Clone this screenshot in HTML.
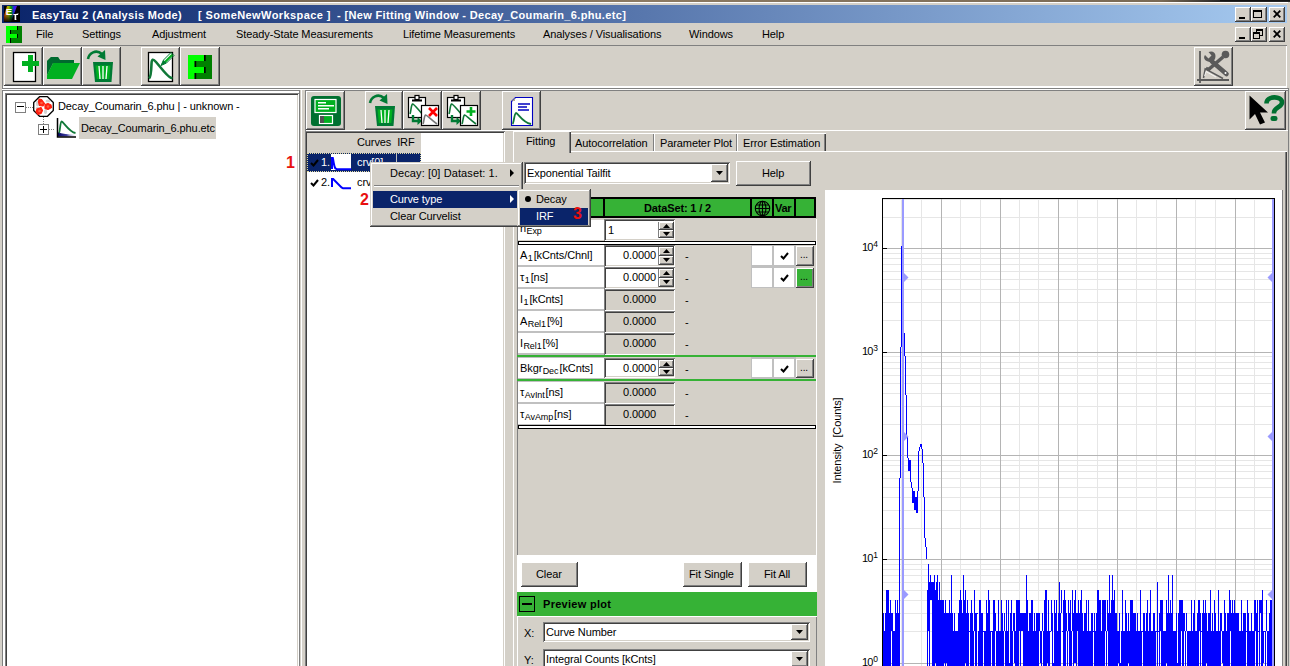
<!DOCTYPE html>
<html><head><meta charset="utf-8">
<style>
html,body{margin:0;padding:0;}
body{width:1290px;height:666px;overflow:hidden;position:relative;background:#d4d0c8;font-family:"Liberation Sans",sans-serif;font-size:11px;color:#000;}
.a{position:absolute;}
.t{position:absolute;white-space:pre;line-height:13px;letter-spacing:-0.1px;}
.raised{background:#d4d0c8;box-shadow:inset -1px -1px #404040,inset 1px 1px #fff,inset -2px -2px #808080;}
.sunk{box-shadow:inset 1px 1px #808080,inset -1px -1px #fff,inset 2px 2px #404040,inset -2px -2px #d4d0c8;}
.cbtn{position:absolute;width:16px;height:15px;background:#d4d0c8;box-shadow:inset -1px -1px #404040,inset 1px 1px #fff,inset -2px -2px #808080;}
</style></head>
<body>
<!-- desktop strip -->
<div class="a" style="left:0;top:0;width:1290px;height:2px;background:linear-gradient(to right,#6a5a48,#8c7a62 50%,#7a6a55 90%,#222 95%)"></div>
<div class="a" style="left:1220px;top:0;width:70px;height:1px;background:#111"></div>
<div class="a" style="left:0;top:2px;width:1288px;height:1px;background:#fff"></div>
<!-- title bar -->
<div class="a" style="left:2px;top:5px;width:1285px;height:18px;background:linear-gradient(to right,#0a246a,#a6caf0)"></div>
<div class="a" id="logo" style="left:4px;top:6px;width:16px;height:16px;background:#000;overflow:hidden">
 <svg width="16" height="16" viewBox="0 0 16 16">
  <defs><linearGradient id="rb" x1="0" y1="0" x2="1" y2="0"><stop offset="0" stop-color="#d00000"/><stop offset="0.25" stop-color="#e08000"/><stop offset="0.45" stop-color="#a0c000"/><stop offset="0.6" stop-color="#00a000"/><stop offset="0.8" stop-color="#2020ff"/><stop offset="1" stop-color="#8000d0"/></linearGradient>
  <linearGradient id="fd" x1="0" y1="0" x2="0" y2="1"><stop offset="0" stop-color="#000" stop-opacity="0"/><stop offset="0.45" stop-color="#000" stop-opacity="0.1"/><stop offset="1" stop-color="#000" stop-opacity="0.95"/></linearGradient></defs>
  <path d="M3 0 H13 L7 16 H-2 Z" fill="url(#rb)"/>
  <path d="M-2 0 H16 V16 H-2 Z" fill="url(#fd)"/>
  <text x="1.8" y="8.6" font-family="Liberation Sans" font-weight="bold" font-size="9.5" fill="#fff">E</text>
  <path d="M8.5 8.2 C9.5 7.6 13 8.2 14.5 7.2 L14 9 H12.2 V13.5 L13 13.8 L12 14 H10.6 V9 Z" fill="#fff"/>
 </svg>
</div>
<div class="t" style="left:32px;top:9px;color:#fff;font-weight:bold;letter-spacing:0.36px">EasyTau 2 (Analysis Mode)</div>
<div class="t" style="left:198px;top:9px;color:#fff;font-weight:bold;letter-spacing:0.42px">[ SomeNewWorkspace ]</div>
<div class="t" style="left:337px;top:9px;color:#fff;font-weight:bold;letter-spacing:0.34px">- [New Fitting Window - Decay_Coumarin_6.phu.etc]</div>
<!-- caption buttons -->
<div class="cbtn" style="left:1235px;top:7px"><div class="a" style="left:4px;top:10px;width:6px;height:2px;background:#000"></div></div>
<div class="cbtn" style="left:1251px;top:7px"><div class="a" style="left:2px;top:3px;width:7px;height:5px;border:1px solid #000;border-top-width:2px"></div></div>
<div class="cbtn" style="left:1269px;top:7px"><svg class="a" style="left:4px;top:3px" width="8" height="8"><path d="M0.7 0.7 L7.3 7.3 M7.3 0.7 L0.7 7.3" stroke="#000" stroke-width="1.8"/></svg></div>

<!-- menu bar -->
<div class="a" style="left:6px;top:26px;width:16px;height:17px;background:#008000">
 <div class="a" style="left:0;top:0;width:11px;height:17px;background:#00ff00"></div>
 <div class="a" style="left:5px;top:4px;width:7px;height:4px;background:#008000"></div>
 <div class="a" style="left:5px;top:12px;width:7px;height:5px;background:#008000"></div>
 <div class="a" style="left:4px;top:4px;width:1px;height:4px;background:#000"></div>
 <div class="a" style="left:4px;top:12px;width:1px;height:5px;background:#000"></div>
 <div class="a" style="left:11px;top:0;width:1px;height:4px;background:#000"></div>
 <div class="a" style="left:11px;top:8px;width:1px;height:4px;background:#000"></div>
</div>
<div class="t" style="left:36px;top:28px">File</div>
<div class="t" style="left:82px;top:28px">Settings</div>
<div class="t" style="left:152px;top:28px">Adjustment</div>
<div class="t" style="left:236px;top:28px">Steady-State Measurements</div>
<div class="t" style="left:403px;top:28px">Lifetime Measurements</div>
<div class="t" style="left:543px;top:28px">Analyses / Visualisations</div>
<div class="t" style="left:689px;top:28px">Windows</div>
<div class="t" style="left:762px;top:28px">Help</div>
<div class="cbtn" style="left:1235px;top:27px"><div class="a" style="left:4px;top:10px;width:6px;height:2px;background:#000"></div></div>
<div class="cbtn" style="left:1251px;top:27px">
 <div class="a" style="left:5px;top:2px;width:5px;height:4px;border:1px solid #000;border-top-width:2px"></div>
 <div class="a" style="left:2px;top:5px;width:5px;height:4px;border:1px solid #000;border-top-width:2px;background:#d4d0c8"></div>
</div>
<div class="cbtn" style="left:1269px;top:27px"><svg class="a" style="left:4px;top:3px" width="8" height="8"><path d="M0.7 0.7 L7.3 7.3 M7.3 0.7 L0.7 7.3" stroke="#000" stroke-width="1.8"/></svg></div>

<!-- main toolbar -->
<div class="a" style="left:2px;top:45px;width:1285px;height:43px;box-shadow:inset 1px 1px #808080,inset -1px -1px #fff,inset 0 -2px #fff"></div>
<div class="a raised" style="left:4px;top:47px;width:39px;height:39px"></div>
<div class="a raised" style="left:43px;top:47px;width:39px;height:39px"></div>
<div class="a raised" style="left:82px;top:47px;width:39px;height:39px"></div>
<div class="a raised" style="left:141px;top:47px;width:39px;height:39px"></div>
<div class="a raised" style="left:180px;top:47px;width:40px;height:39px"></div>
<div class="a raised" style="left:1194px;top:47px;width:39px;height:39px"></div>
<div class="a" style="left:2px;top:88px;width:1286px;height:1px;background:#808080"></div>
<div class="a" style="left:2px;top:89px;width:1286px;height:1px;background:#fff"></div>

<!-- tree panel -->
<div class="a" style="left:2px;top:90px;width:298px;height:580px;box-shadow:inset 1px 1px #808080,inset -1px -1px #808080"></div>
<div class="a" style="left:3px;top:91px;width:296px;height:580px;box-shadow:inset 2px 2px #fff,inset -2px -2px #fff"></div>
<div class="a sunk" style="left:5px;top:93px;width:294px;height:580px;background:#fff"></div>

<!-- MDI child -->
<div class="a" style="left:301px;top:90px;width:1px;height:580px;background:#fff"></div>
<div class="a" style="left:305px;top:90px;width:1px;height:580px;background:#808080"></div>
<div class="a" style="left:305px;top:90px;width:983px;height:1px;background:#808080"></div>

<div class="a raised" style="left:306px;top:91px;width:39px;height:39px"></div>
<div class="a raised" style="left:365px;top:91px;width:38px;height:39px"></div>
<div class="a raised" style="left:403px;top:91px;width:39px;height:39px"></div>
<div class="a raised" style="left:442px;top:91px;width:39px;height:39px"></div>
<div class="a raised" style="left:502px;top:91px;width:39px;height:39px"></div>
<div class="a raised" style="left:1245px;top:91px;width:41px;height:39px"></div>

<!-- curves list -->
<div class="a sunk" style="left:305px;top:131px;width:200px;height:560px;background:#fff"></div>


<!-- tabs -->
<div class="a" style="left:306px;top:130px;width:982px;height:1px;background:#fff"></div>
<div class="a" style="left:570px;top:133px;width:85px;height:19px;background:#d4d0c8;box-shadow:inset 1px 1px #fff,inset -1px 0 #404040,inset -2px 0 #808080"></div>
<div class="t" style="left:575px;top:137px">Autocorrelation</div>
<div class="a" style="left:654px;top:133px;width:84px;height:19px;background:#d4d0c8;box-shadow:inset 1px 1px #fff,inset -1px 0 #404040,inset -2px 0 #808080"></div>
<div class="t" style="left:660px;top:137px">Parameter Plot</div>
<div class="a" style="left:737px;top:133px;width:89px;height:19px;background:#d4d0c8;box-shadow:inset 1px 1px #fff,inset -1px 0 #404040,inset -2px 0 #808080"></div>
<div class="t" style="left:743px;top:137px">Error Estimation</div>
<!-- tab body -->
<div class="a" style="left:513px;top:151px;width:774px;height:530px;background:#d4d0c8;box-shadow:inset 1px 1px #fff,inset -1px 0 #404040,inset -2px 0 #808080"></div>
<div class="a" style="left:513px;top:131px;width:58px;height:22px;background:#d4d0c8;box-shadow:inset 1px 1px #fff,inset -1px 0 #404040,inset -2px 0 #808080"></div>
<div class="t" style="left:526px;top:135px">Fitting</div>

<div class="a" style="left:1288px;top:88px;width:1px;height:590px;background:#808080"></div>
<!-- PLOT -->
<div class="a" style="left:825px;top:190px;width:457px;height:480px;background:#fff"></div>
<div class="a" style="left:1282px;top:190px;width:1px;height:480px;background:#808080"></div>
<svg class="a" style="left:0;top:0" width="1290" height="666" shape-rendering="crispEdges">
<path d="M901.5 198V666M921.5 198V666M960.5 198V666M980.5 198V666M1019.5 198V666M1038.5 198V666M1077.5 198V666M1097.5 198V666M1136.5 198V666M1156.5 198V666M1195.5 198V666M1215.5 198V666M1254.5 198V666" stroke="#e6e6e6" stroke-width="1"/>
<path d="M882 631.5H1274M882 613.5H1274M882 600.5H1274M882 590.5H1274M882 582.5H1274M882 575.5H1274M882 569.5H1274M882 564.5H1274M882 528.5H1274M882 510.5H1274M882 497.5H1274M882 487.5H1274M882 478.5H1274M882 471.5H1274M882 465.5H1274M882 460.5H1274M882 424.5H1274M882 406.5H1274M882 393.5H1274M882 383.5H1274M882 375.5H1274M882 368.5H1274M882 362.5H1274M882 356.5H1274M882 320.5H1274M882 302.5H1274M882 289.5H1274M882 279.5H1274M882 271.5H1274M882 264.5H1274M882 258.5H1274M882 253.5H1274M882 217.5H1274M882 199.5H1274" stroke="#e6e6e6" stroke-width="1"/>
<path d="M941.5 198V666M1000.5 198V666M1058.5 198V666M1117.5 198V666M1176.5 198V666M1235.5 198V666" stroke="#b4b4b4" stroke-width="1"/>
<path d="M882 663.5H1274M882 559.5H1274M882 455.5H1274M882 352.5H1274M882 248.5H1274" stroke="#b4b4b4" stroke-width="1"/>
<path d="M882.5 666V198.5H1274.5V666" fill="none" stroke="#000" stroke-width="1"/>
<path d="M882 663.5H887M882 559.5H887M882 455.5H887M882 352.5H887M882 248.5H887" stroke="#000" stroke-width="1"/>
<path d="M883.5 613V670M884.5 631V670M885.5 613V670M886.5 590V670M887.5 590V670M888.5 590V670M889.5 613V670M890.5 600V670M891.5 613V631M892.5 613V670M893.5 631V670M894.5 631V670M895.5 600V670M896.5 613V670M897.5 600V670M898.5 613V670M899.5 478V670M900.5 347V478M901.5 246V347M902.5 246V289M903.5 289V333M904.5 333V356M905.5 356V395M906.5 395V437M907.5 437V458M908.5 458V471M909.5 460V471M910.5 460V482M911.5 482V488M912.5 488V503M913.5 491V503M914.5 491V510M915.5 497V510M916.5 497V513M917.5 491V513M918.5 451V491M919.5 447V451M920.5 444V447M921.5 444V449M922.5 449V463M923.5 463V497M924.5 497V538M925.5 538V547M926.5 547V559M927.5 590V670M928.5 564V631M929.5 582V670M930.5 575V600M931.5 582V600M932.5 582V670M933.5 582V670M934.5 575V670M935.5 590V663M936.5 582V670M937.5 575V670M938.5 600V670M939.5 582V670M940.5 600V670M941.5 600V670M942.5 600V670M943.5 600V670M944.5 613V663M945.5 600V670M946.5 613V663M947.5 613V670M948.5 613V670M949.5 600V670M950.5 613V670M951.5 575V670M952.5 613V670M953.5 631V670M954.5 613V670M955.5 631V670M956.5 631V670M957.5 631V670M958.5 613V670M959.5 600V670M960.5 590V670M961.5 600V670M962.5 613V670M963.5 575V670M964.5 600V670M965.5 590V663M966.5 613V670M967.5 600V670M968.5 613V670M969.5 631V632M970.5 613V670M971.5 600V670M972.5 613V670M973.5 631V670M974.5 590V631M975.5 613V670M976.5 613V670M977.5 613V614M978.5 631V670M979.5 600V670M980.5 600V670M981.5 613V670M982.5 613V670M983.5 631V632M984.5 631V670M985.5 631V670M986.5 600V670M987.5 613V670M988.5 590V670M989.5 600V670M990.5 631V670M991.5 631V632M992.5 631V670M993.5 600V670M994.5 600V670M995.5 613V631M996.5 631V670M997.5 631V670M998.5 600V670M999.5 631V670M1000.5 631V670M1001.5 600V670M1002.5 613V670M1003.5 631V670M1004.5 613V631M1005.5 631V670M1006.5 600V670M1007.5 631V670M1008.5 600V670M1009.5 663V670M1010.5 613V670M1011.5 600V670M1012.5 631V670M1013.5 613V631M1014.5 613V663M1015.5 631V670M1016.5 600V670M1017.5 600V670M1018.5 600V670M1019.5 600V631M1020.5 613V670M1021.5 613V631M1022.5 613V631M1023.5 613V670M1024.5 613V670M1025.5 613V670M1026.5 575V670M1027.5 600V670M1028.5 631V670M1029.5 613V670M1030.5 613V670M1031.5 600V670M1032.5 600V670M1033.5 631V670M1034.5 613V670M1035.5 631V670M1036.5 613V670M1037.5 613V670M1038.5 613V670M1039.5 613V631M1040.5 631V663M1041.5 631V670M1042.5 613V631M1043.5 631V670M1044.5 600V670M1045.5 590V670M1046.5 590V670M1047.5 631V663M1048.5 600V670M1049.5 631V670M1050.5 631V632M1051.5 600V631M1052.5 613V670M1053.5 663V670M1054.5 600V670M1055.5 613V670M1056.5 600V670M1057.5 631V670M1058.5 613V670M1059.5 582V670M1060.5 613V670M1061.5 590V613M1062.5 631V632M1063.5 600V670M1064.5 590V670M1065.5 600V670M1066.5 613V631M1067.5 631V670M1068.5 600V631M1069.5 613V670M1070.5 600V670M1071.5 631V670M1072.5 590V631M1073.5 613V670M1074.5 600V663M1075.5 590V663M1076.5 613V670M1077.5 613V631M1078.5 600V670M1079.5 613V670M1080.5 600V670M1081.5 590V670M1082.5 613V670M1083.5 631V670M1084.5 613V670M1085.5 613V670M1086.5 600V670M1087.5 631V670M1088.5 600V670M1089.5 631V670M1090.5 631V670M1091.5 613V670M1092.5 613V670M1093.5 631V632M1094.5 613V670M1095.5 631V670M1096.5 613V670M1097.5 590V670M1098.5 590V670M1099.5 600V670M1100.5 600V670M1101.5 631V670M1102.5 600V670M1103.5 600V670M1104.5 600V670M1105.5 600V631M1106.5 631V670M1107.5 600V631M1108.5 613V670M1109.5 575V670M1110.5 613V670M1111.5 600V670M1112.5 575V670M1113.5 600V670M1114.5 590V670M1115.5 613V670M1116.5 613V670M1117.5 631V670M1118.5 631V663M1119.5 613V670M1120.5 663V670M1121.5 631V670M1122.5 590V670M1123.5 631V670M1124.5 631V670M1125.5 600V670M1126.5 613V670M1127.5 631V670M1128.5 613V663M1129.5 631V670M1130.5 600V670M1131.5 600V670M1132.5 600V670M1133.5 613V670M1134.5 613V670M1135.5 613V670M1136.5 631V670M1137.5 613V670M1138.5 631V670M1139.5 631V670M1140.5 590V670M1141.5 631V670M1142.5 631V632M1143.5 613V670M1144.5 613V670M1145.5 631V670M1146.5 613V670M1147.5 600V670M1148.5 631V670M1149.5 613V670M1150.5 590V670M1151.5 631V670M1152.5 631V670M1153.5 613V670M1154.5 613V670M1155.5 631V670M1156.5 631V632M1157.5 582V670M1158.5 631V632M1159.5 613V670M1160.5 600V631M1161.5 600V670M1162.5 600V670M1163.5 631V670M1164.5 631V670M1165.5 631V670M1166.5 600V663M1167.5 613V670M1168.5 575V670M1169.5 613V670M1170.5 600V670M1171.5 613V670M1172.5 575V670M1173.5 631V670M1174.5 631V670M1175.5 631V670M1176.5 613V670M1177.5 663V670M1178.5 613V670M1179.5 600V670M1180.5 600V670M1181.5 600V631M1182.5 600V670M1183.5 613V670M1184.5 613V631M1185.5 631V670M1186.5 613V631M1187.5 631V670M1188.5 631V670M1189.5 631V670M1190.5 631V670M1191.5 600V670M1192.5 631V670M1193.5 613V670M1194.5 600V670M1195.5 631V670M1196.5 631V670M1197.5 613V670M1198.5 600V670M1199.5 600V631M1200.5 613V670M1201.5 631V632M1202.5 613V670M1203.5 600V670M1204.5 613V670M1205.5 600V670M1206.5 613V663M1207.5 631V670M1208.5 613V670M1209.5 613V670M1210.5 590V670M1211.5 631V670M1212.5 613V670M1213.5 631V670M1214.5 600V670M1215.5 613V670M1216.5 631V670M1217.5 631V670M1218.5 590V670M1219.5 631V670M1220.5 613V670M1221.5 613V631M1222.5 631V663M1223.5 631V670M1224.5 600V670M1225.5 613V670M1226.5 631V670M1227.5 613V670M1228.5 613V670M1229.5 590V670M1230.5 600V631M1231.5 613V670M1232.5 600V670M1233.5 613V670M1234.5 600V670M1235.5 613V670M1236.5 613V670M1237.5 613V670M1238.5 613V670M1239.5 631V670M1240.5 631V670M1241.5 600V670M1242.5 631V670M1243.5 613V670M1244.5 613V670M1245.5 613V670M1246.5 631V632M1247.5 600V670M1248.5 613V670M1249.5 631V670M1250.5 631V670M1251.5 613V670M1252.5 631V670M1253.5 631V670M1254.5 600V670M1255.5 600V631M1256.5 613V670M1257.5 600V670M1258.5 631V632M1259.5 600V670M1260.5 600V613M1261.5 600V670M1262.5 590V670M1263.5 631V663M1264.5 631V632M1265.5 631V670M1266.5 600V631M1267.5 631V670M1268.5 631V670M1269.5 613V670M1270.5 600V670M1271.5 600V670M1272.5 631V670M1273.5 631V670" stroke="#0000ff" stroke-width="1" fill="none"/>
<path d="M903 199V666M1273 199V666" stroke="#9a9aff" stroke-width="2"/>
</svg>
<svg class="a" style="left:904px;top:273px" width="5" height="9"><path d="M0 0 L4.5 4.5 L0 9Z" fill="#9a9aff"/></svg>
<svg class="a" style="left:1267px;top:273px" width="5" height="9"><path d="M5 0 L0.5 4.5 L5 9Z" fill="#9a9aff"/></svg>
<svg class="a" style="left:904px;top:432px" width="5" height="9"><path d="M0 0 L4.5 4.5 L0 9Z" fill="#9a9aff"/></svg>
<svg class="a" style="left:1267px;top:432px" width="5" height="9"><path d="M5 0 L0.5 4.5 L5 9Z" fill="#9a9aff"/></svg>
<svg class="a" style="left:904px;top:590px" width="5" height="9"><path d="M0 0 L4.5 4.5 L0 9Z" fill="#9a9aff"/></svg>
<svg class="a" style="left:1267px;top:590px" width="5" height="9"><path d="M5 0 L0.5 4.5 L5 9Z" fill="#9a9aff"/></svg>
<div class="t" style="left:862px;top:656px;font-size:11px;letter-spacing:-0.8px">10<span style="font-size:8.5px;position:relative;top:-4px;letter-spacing:0;margin-left:0.5px">0</span></div>
<div class="t" style="left:862px;top:552px;font-size:11px;letter-spacing:-0.8px">10<span style="font-size:8.5px;position:relative;top:-4px;letter-spacing:0;margin-left:0.5px">1</span></div>
<div class="t" style="left:862px;top:448px;font-size:11px;letter-spacing:-0.8px">10<span style="font-size:8.5px;position:relative;top:-4px;letter-spacing:0;margin-left:0.5px">2</span></div>
<div class="t" style="left:862px;top:345px;font-size:11px;letter-spacing:-0.8px">10<span style="font-size:8.5px;position:relative;top:-4px;letter-spacing:0;margin-left:0.5px">3</span></div>
<div class="t" style="left:862px;top:241px;font-size:11px;letter-spacing:-0.8px">10<span style="font-size:8.5px;position:relative;top:-4px;letter-spacing:0;margin-left:0.5px">4</span></div>
<div class="t" style="left:787px;top:434px;width:100px;text-align:center;transform:rotate(-90deg)">Intensity  [Counts]</div>
<!-- /PLOT -->
<!-- fitting panel -->
<div class="a" style="left:524px;top:162px;width:206px;height:22px;background:#fff;box-shadow:inset 1px 1px #808080,inset -1px -1px #fff,inset 2px 2px #404040,inset -2px -2px #d4d0c8"></div>
<div class="t" style="left:527px;top:167px">Exponential Tailfit</div>
<div class="a raised" style="left:711px;top:164px;width:17px;height:18px"><svg class="a" style="left:5px;top:7px" width="7" height="4"><path d="M0 0 H7 L3.5 4 Z" fill="#000"/></svg></div>
<div class="a raised" style="left:736px;top:161px;width:75px;height:25px"></div>
<div class="t" style="left:762px;top:167px">Help</div>

<div class="a" style="left:517px;top:196px;width:1px;height:359px;background:#808080"></div>

<div class="a" style="left:816px;top:219px;width:1px;height:336px;background:#fff"></div>
<!-- green header -->
<div class="a" style="left:517px;top:197px;width:299px;height:21px;background:#000"></div>
<div class="a" style="left:518px;top:199px;width:85px;height:17px;background:#36b236"></div>
<div class="a" style="left:605px;top:199px;width:145px;height:17px;background:#36b236"></div>
<div class="a" style="left:752px;top:199px;width:20px;height:17px;background:#36b236"></div>
<div class="a" style="left:774px;top:199px;width:20px;height:17px;background:#36b236"></div>
<div class="a" style="left:796px;top:199px;width:18px;height:17px;background:#36b236"></div>
<div class="t" style="left:644px;top:202px;font-weight:bold;letter-spacing:-0.15px">DataSet: 1 / 2</div>
<div class="t" style="left:775px;top:202px;font-weight:bold;letter-spacing:-0.3px">Var</div>
<svg class="a" style="left:754px;top:200px" width="17" height="17" viewBox="0 0 17 17"><g fill="none" stroke="#000" stroke-width="1.1"><circle cx="8.5" cy="8.5" r="7.2"/><ellipse cx="8.5" cy="8.5" rx="3.4" ry="7.2"/><path d="M8.5 1.3V15.7M1.3 8.5H15.7M2.3 5H14.7M2.3 12H14.7"/></g></svg>

<div class="a" style="left:518px;top:220px;width:86px;height:20px;background:#fff"></div>
<div class="t" style="left:520px;top:222px">n<span style="font-size:9px;position:relative;top:2px;margin:0 1px 0 0.5px">Exp</span></div>
<div class="a" style="left:604px;top:219px;width:71px;height:22px;background:#fff;box-shadow:inset 1px 1px #808080,inset -1px -1px #fff,inset 2px 2px #404040,inset -2px -2px #d4d0c8"></div>
<div class="t" style="left:608px;top:224px">1</div>
<div class="a" style="left:658px;top:222px;width:1px;height:16px;background:#808080"></div>
<div class="a raised" style="left:659px;top:222px;width:15px;height:8px"><svg class="a" style="left:4px;top:2px" width="7" height="4"><path d="M3.5 0 L7 4 H0 Z" fill="#000"/></svg></div>
<div class="a raised" style="left:659px;top:230px;width:15px;height:8px"><svg class="a" style="left:4px;top:2px" width="7" height="4"><path d="M0 0 H7 L3.5 4 Z" fill="#000"/></svg></div>
<div class="a" style="left:518px;top:241px;width:298px;height:4px;background:#fff;box-shadow:inset 1px 1px #000,inset -1px -1px #000"></div>
<div class="a" style="left:518px;top:245px;width:86px;height:180px;background:#c0c0c0"></div>
<div class="a" style="left:751px;top:245px;width:45px;height:43px;background:#c0c0c0"></div>
<div class="a" style="left:751px;top:357px;width:45px;height:22px;background:#c0c0c0"></div>
<div class="a" style="left:518px;top:245px;width:86px;height:20px;background:#fff"></div>
<div class="t" style="left:520px;top:249px">A<span style="font-size:9px;position:relative;top:2px;margin:0 1px 0 0.5px">1</span>[kCnts/Chnl]</div>
<div class="a" style="left:604px;top:245px;width:71px;height:22px;background:#fff;box-shadow:inset 1px 1px #808080,inset -1px -1px #fff,inset 2px 2px #404040,inset -2px -2px #d4d0c8"></div>
<div class="t" style="left:623px;top:249px">0.0000</div>
<div class="a" style="left:658px;top:247px;width:1px;height:18px;background:#808080"></div>
<div class="a raised" style="left:659px;top:247px;width:15px;height:9px"><svg class="a" style="left:4px;top:2px" width="7" height="4"><path d="M3.5 0 L7 4 H0 Z" fill="#000"/></svg></div>
<div class="a raised" style="left:659px;top:256px;width:15px;height:9px"><svg class="a" style="left:4px;top:2px" width="7" height="4"><path d="M0 0 H7 L3.5 4 Z" fill="#000"/></svg></div>
<div class="t" style="left:685px;top:250px">-</div>
<div class="a" style="left:752px;top:246px;width:20px;height:19px;background:#fff"></div>
<div class="a" style="left:774px;top:246px;width:20px;height:19px;background:#fff"></div>
<svg class="a" style="left:780px;top:252px" width="9" height="8"><path d="M1 4 L3.5 6.5 L8 1" fill="none" stroke="#000" stroke-width="2"/></svg>
<div class="a" style="left:796px;top:246px;width:18px;height:20px;background:#d4d0c8;box-shadow:inset -1px -1px #404040,inset 1px 1px #fff,inset -2px -2px #808080"></div>
<div class="t" style="left:800px;top:248px;font-size:10px">...</div>
<div class="a" style="left:518px;top:267px;width:86px;height:20px;background:#fff"></div>
<div class="t" style="left:520px;top:271px">τ<span style="font-size:9px;position:relative;top:2px;margin:0 1px 0 0.5px">1</span>[ns]</div>
<div class="a" style="left:604px;top:267px;width:71px;height:22px;background:#fff;box-shadow:inset 1px 1px #808080,inset -1px -1px #fff,inset 2px 2px #404040,inset -2px -2px #d4d0c8"></div>
<div class="t" style="left:623px;top:271px">0.0000</div>
<div class="a" style="left:658px;top:269px;width:1px;height:18px;background:#808080"></div>
<div class="a raised" style="left:659px;top:269px;width:15px;height:9px"><svg class="a" style="left:4px;top:2px" width="7" height="4"><path d="M3.5 0 L7 4 H0 Z" fill="#000"/></svg></div>
<div class="a raised" style="left:659px;top:278px;width:15px;height:9px"><svg class="a" style="left:4px;top:2px" width="7" height="4"><path d="M0 0 H7 L3.5 4 Z" fill="#000"/></svg></div>
<div class="t" style="left:685px;top:272px">-</div>
<div class="a" style="left:752px;top:268px;width:20px;height:19px;background:#fff"></div>
<div class="a" style="left:774px;top:268px;width:20px;height:19px;background:#fff"></div>
<svg class="a" style="left:780px;top:274px" width="9" height="8"><path d="M1 4 L3.5 6.5 L8 1" fill="none" stroke="#000" stroke-width="2"/></svg>
<div class="a" style="left:796px;top:268px;width:18px;height:20px;background:#36b236;box-shadow:inset -1px -1px #404040,inset 1px 1px #fff,inset -2px -2px #808080"></div>
<div class="t" style="left:800px;top:270px;font-size:10px">...</div>
<div class="a" style="left:518px;top:289px;width:86px;height:20px;background:#fff"></div>
<div class="t" style="left:520px;top:293px">I<span style="font-size:9px;position:relative;top:2px;margin:0 1px 0 0.5px">1</span>[kCnts]</div>
<div class="a" style="left:604px;top:289px;width:71px;height:22px;background:#d4d0c8;box-shadow:inset 1px 1px #808080,inset -1px -1px #fff,inset 2px 2px #404040,inset -2px -2px #d4d0c8"></div>
<div class="t" style="left:623px;top:293px">0.0000</div>
<div class="t" style="left:685px;top:294px">-</div>
<div class="a" style="left:518px;top:311px;width:86px;height:20px;background:#fff"></div>
<div class="t" style="left:520px;top:315px">A<span style="font-size:9px;position:relative;top:2px;margin:0 1px 0 0.5px">Rel1</span>[%]</div>
<div class="a" style="left:604px;top:311px;width:71px;height:22px;background:#d4d0c8;box-shadow:inset 1px 1px #808080,inset -1px -1px #fff,inset 2px 2px #404040,inset -2px -2px #d4d0c8"></div>
<div class="t" style="left:623px;top:315px">0.0000</div>
<div class="t" style="left:685px;top:316px">-</div>
<div class="a" style="left:518px;top:333px;width:86px;height:20px;background:#fff"></div>
<div class="t" style="left:520px;top:337px">I<span style="font-size:9px;position:relative;top:2px;margin:0 1px 0 0.5px">Rel1</span>[%]</div>
<div class="a" style="left:604px;top:333px;width:71px;height:22px;background:#d4d0c8;box-shadow:inset 1px 1px #808080,inset -1px -1px #fff,inset 2px 2px #404040,inset -2px -2px #d4d0c8"></div>
<div class="t" style="left:623px;top:337px">0.0000</div>
<div class="t" style="left:685px;top:338px">-</div>
<div class="a" style="left:518px;top:358px;width:86px;height:20px;background:#fff"></div>
<div class="t" style="left:520px;top:362px">Bkgr<span style="font-size:9px;position:relative;top:2px;margin:0 1px 0 0.5px">Dec</span>[kCnts]</div>
<div class="a" style="left:604px;top:358px;width:71px;height:20px;background:#fff;box-shadow:inset 1px 1px #808080,inset -1px -1px #fff,inset 2px 2px #404040,inset -2px -2px #d4d0c8"></div>
<div class="t" style="left:623px;top:362px">0.0000</div>
<div class="a" style="left:658px;top:360px;width:1px;height:16px;background:#808080"></div>
<div class="a raised" style="left:659px;top:360px;width:15px;height:8px"><svg class="a" style="left:4px;top:2px" width="7" height="4"><path d="M3.5 0 L7 4 H0 Z" fill="#000"/></svg></div>
<div class="a raised" style="left:659px;top:368px;width:15px;height:8px"><svg class="a" style="left:4px;top:2px" width="7" height="4"><path d="M0 0 H7 L3.5 4 Z" fill="#000"/></svg></div>
<div class="t" style="left:685px;top:363px">-</div>
<div class="a" style="left:752px;top:359px;width:20px;height:18px;background:#fff"></div>
<div class="a" style="left:774px;top:359px;width:20px;height:18px;background:#fff"></div>
<svg class="a" style="left:780px;top:365px" width="9" height="8"><path d="M1 4 L3.5 6.5 L8 1" fill="none" stroke="#000" stroke-width="2"/></svg>
<div class="a" style="left:796px;top:359px;width:18px;height:19px;background:#d4d0c8;box-shadow:inset -1px -1px #404040,inset 1px 1px #fff,inset -2px -2px #808080"></div>
<div class="t" style="left:800px;top:361px;font-size:10px">...</div>
<div class="a" style="left:518px;top:382px;width:86px;height:20px;background:#fff"></div>
<div class="t" style="left:520px;top:386px">τ<span style="font-size:9px;position:relative;top:2px;margin:0 1px 0 0.5px">AvInt</span>[ns]</div>
<div class="a" style="left:604px;top:382px;width:71px;height:22px;background:#d4d0c8;box-shadow:inset 1px 1px #808080,inset -1px -1px #fff,inset 2px 2px #404040,inset -2px -2px #d4d0c8"></div>
<div class="t" style="left:623px;top:386px">0.0000</div>
<div class="t" style="left:685px;top:387px">-</div>
<div class="a" style="left:518px;top:404px;width:86px;height:20px;background:#fff"></div>
<div class="t" style="left:520px;top:408px">τ<span style="font-size:9px;position:relative;top:2px;margin:0 1px 0 0.5px">AvAmp</span>[ns]</div>
<div class="a" style="left:604px;top:404px;width:71px;height:22px;background:#d4d0c8;box-shadow:inset 1px 1px #808080,inset -1px -1px #fff,inset 2px 2px #404040,inset -2px -2px #d4d0c8"></div>
<div class="t" style="left:623px;top:408px">0.0000</div>
<div class="t" style="left:685px;top:409px">-</div>
<div class="a" style="left:517px;top:355px;width:299px;height:2px;background:#36b236"></div>
<div class="a" style="left:517px;top:379px;width:299px;height:2px;background:#36b236"></div>
<div class="a" style="left:518px;top:425px;width:298px;height:4px;background:#fff;box-shadow:inset 1px 1px #000,inset -1px -1px #000"></div>
<div class="a" style="left:517px;top:555px;width:300px;height:37px;background:#fff"></div>
<div class="a raised" style="left:521px;top:562px;width:57px;height:25px"></div>
<div class="t" style="left:536px;top:568px">Clear</div>
<div class="a raised" style="left:683px;top:562px;width:59px;height:25px"></div>
<div class="t" style="left:689px;top:568px">Fit Single</div>
<div class="a raised" style="left:748px;top:562px;width:59px;height:25px"></div>
<div class="t" style="left:764px;top:568px">Fit All</div>
<div class="a" style="left:517px;top:592px;width:300px;height:24px;background:#36b236"></div>
<div class="a" style="left:519px;top:596px;width:14px;height:14px;border:1px solid #000"></div>
<div class="a" style="left:522px;top:603px;width:10px;height:2px;background:#000"></div>
<div class="t" style="left:543px;top:598px;font-weight:bold;letter-spacing:0.29px">Preview plot</div>
<div class="a" style="left:517px;top:616px;width:300px;height:60px;background:#d4d0c8;box-shadow:inset 1px 1px #fff,inset -1px 0 #808080"></div>
<div class="t" style="left:524px;top:627px">X:</div>
<div class="t" style="left:524px;top:654px">Y:</div>
<div class="a" style="left:543px;top:622px;width:267px;height:20px;background:#fff;box-shadow:inset 1px 1px #808080,inset -1px -1px #fff,inset 2px 2px #404040,inset -2px -2px #d4d0c8"></div>
<div class="t" style="left:546px;top:626px">Curve Number</div>
<div class="a raised" style="left:791px;top:624px;width:17px;height:16px"><svg class="a" style="left:5px;top:6px" width="7" height="4"><path d="M0 0 H7 L3.5 4 Z" fill="#000"/></svg></div>
<div class="a" style="left:543px;top:649px;width:267px;height:20px;background:#fff;box-shadow:inset 1px 1px #808080,inset -1px -1px #fff,inset 2px 2px #404040,inset -2px -2px #d4d0c8"></div>
<div class="t" style="left:546px;top:653px">Integral Counts [kCnts]</div>
<div class="a raised" style="left:791px;top:651px;width:17px;height:16px"><svg class="a" style="left:5px;top:6px" width="7" height="4"><path d="M0 0 H7 L3.5 4 Z" fill="#000"/></svg></div>
<!-- ICONS -->
<svg class="a" style="left:3px;top:46px" width="40" height="40" viewBox="0 0 40 40"><rect x="10.5" y="6.5" width="22" height="29" fill="#fff" stroke="#000" stroke-width="1.3"/><path d="M25 9h5v6h6v5h-6v6h-5v-6h-6v-5h6z" fill="#00b020"/></svg>
<svg class="a" style="left:43px;top:46px" width="39" height="40" viewBox="0 0 39 40"><path d="M4 15 L8 11 H15 L17 14 H31 V17 H10 L4 29 Z" fill="#007a34"/><path d="M4 29 L10 17 H37 L29 33 H4 Z" fill="#00b020"/><path d="M4 15 L8 11 H15 L17 14 H31 V17 H10 L4 29 Z" fill="#005a28" opacity="0.5"/></svg>
<svg class="a" style="left:82px;top:46px" width="39" height="40" viewBox="0 0 39 40"><g transform="translate(1,0)"><path d="M5 13 C6 7 13 3 19 8" fill="none" stroke="#007a34" stroke-width="2.6"/><path d="M14.5 10.5 L22 4 L22.5 14 Z" fill="#007a34"/><path d="M10 16 H30 L28.5 36 H12 Z" fill="#007a34"/><path d="M12.5 19.5 H27.5 L26.3 33 H13.8 Z" fill="#00b020"/><path d="M16 20 L17 33 M20 20 V33 M24 20 L23 33" stroke="#fff" stroke-width="1.3"/></g></svg>
<svg class="a" style="left:141px;top:46px" width="39" height="40" viewBox="0 0 39 40"><rect x="7.5" y="6.5" width="24" height="29" fill="#fff" stroke="#000" stroke-width="1.3"/><path d="M8 32.5 C10 31 10.3 24 10.5 18 C10.7 13 12 12.5 15 16 L23 25.5 C26 29 28.5 32 31.5 32.3" fill="none" stroke="#107838" stroke-width="2.6"/><path d="M23 15.5 L30.5 8 L32 9.5 L24.5 17 Z" fill="#00b020"/><path d="M22.5 14 L30 6.5 L33 9.5 L25.5 17 L20 19.5 Z" fill="none" stroke="#007a34" stroke-width="1"/><path d="M20 19.5 L22.5 14 L25.5 17 Z" fill="#007a34"/></svg>
<svg class="a" style="left:180px;top:46px" width="40" height="40" viewBox="0 0 40 40"><rect x="8" y="9" width="24" height="24" fill="#008000"/><rect x="8" y="9" width="16" height="24" fill="#00ff00"/><rect x="16" y="15" width="9" height="6" fill="#008000"/><rect x="16" y="27" width="9" height="6" fill="#008000"/><rect x="14.5" y="15" width="1.7" height="6" fill="#000"/><rect x="14.5" y="27" width="1.7" height="6" fill="#000"/><rect x="24" y="9" width="1.7" height="6" fill="#000"/><rect x="24" y="21" width="1.7" height="6" fill="#000"/></svg>
<svg class="a" style="left:1194px;top:47px" width="39" height="39" viewBox="0 0 39 39"><g stroke="#5a5a5a" fill="none"><path d="M6 4 V36 M3 33 H35" stroke-width="1.8"/><path d="M9.5 31 L11.2 21.8 L29 31.5" stroke-width="1.5"/><path d="M10.5 29 L12 24.5 L22 30" stroke="#fff" stroke-width="0.8"/><path d="M18 14.5 L32.5 27" stroke-width="4.6" stroke-linecap="round"/><path d="M29 10 L14 23" stroke-width="3.6"/></g><path d="M11 8 L14.5 11.5 L17.5 8.5 L14.5 5 C18 3.5 21.5 5 21.5 9 C21.5 12 20 14.5 17 15.5 L14 14.5 C10.5 13.5 9 10.5 11 8 Z" fill="#5a5a5a"/><circle cx="31.5" cy="7.5" r="3.8" fill="#5a5a5a"/><path d="M12 21 L16 23" stroke="#5a5a5a" stroke-width="3"/><circle cx="31.5" cy="26" r="1" fill="#fff"/></svg>
<svg class="a" style="left:305px;top:90px" width="40" height="40" viewBox="0 0 40 40"><rect x="6" y="6" width="30" height="30" rx="3" fill="#007030"/><rect x="10" y="9.5" width="21" height="13" fill="#00b020" stroke="#fff" stroke-width="1.2"/><path d="M13 12.8h8M13 15.8h16M13 18.8h11" stroke="#fff" stroke-width="1.4"/><rect x="14.5" y="25.5" width="13" height="8" fill="#00b020" stroke="#fff" stroke-width="1.2"/><rect x="15" y="26" width="4" height="7" fill="#505050"/></svg>
<svg class="a" style="left:364px;top:90px" width="39" height="40" viewBox="0 0 39 40"><g transform="translate(1,0)"><path d="M5 13 C6 7 13 3 19 8" fill="none" stroke="#007a34" stroke-width="2.6"/><path d="M14.5 10.5 L22 4 L22.5 14 Z" fill="#007a34"/><path d="M10 16 H30 L28.5 36 H12 Z" fill="#007a34"/><path d="M12.5 19.5 H27.5 L26.3 33 H13.8 Z" fill="#00b020"/><path d="M16 20 L17 33 M20 20 V33 M24 20 L23 33" stroke="#fff" stroke-width="1.3"/></g></svg>
<svg class="a" style="left:403px;top:90px" width="39" height="40" viewBox="0 0 39 40"><rect x="5.5" y="7.5" width="17" height="20" fill="#fff" stroke="#000" stroke-width="1.2"/><rect x="9" y="9.5" width="10" height="2" fill="#000"/><rect x="12" y="5.5" width="4" height="4" fill="#fff" stroke="#000" stroke-width="1.2"/><path d="M7 24 C8 22 8 15 9.5 14 C11 14 13 17 20 25" fill="none" stroke="#107838" stroke-width="1.6"/><path d="M10 25 V31 H15" fill="none" stroke="#007a34" stroke-width="2.4"/><path d="M14.5 27 L19 31 L14.5 35 Z" fill="#007a34"/><rect x="18.5" y="15.5" width="17" height="20" fill="#fff" stroke="#000" stroke-width="1.2"/><path d="M20 34 C21 32 21 26 22.5 25 C24 25 27 29 34 34" fill="none" stroke="#777" stroke-width="1.6"/><path d="M26 18 L34 26 M34 18 L26 26" stroke="#ff0000" stroke-width="2.6"/></svg>
<svg class="a" style="left:442px;top:90px" width="39" height="40" viewBox="0 0 39 40"><rect x="5.5" y="7.5" width="17" height="20" fill="#fff" stroke="#000" stroke-width="1.2"/><rect x="9" y="9.5" width="10" height="2" fill="#000"/><rect x="12" y="5.5" width="4" height="4" fill="#fff" stroke="#000" stroke-width="1.2"/><path d="M7 24 C8 22 8 15 9.5 14 C11 14 13 17 20 25" fill="none" stroke="#107838" stroke-width="1.6"/><path d="M10 25 V31 H15" fill="none" stroke="#007a34" stroke-width="2.4"/><path d="M14.5 27 L19 31 L14.5 35 Z" fill="#007a34"/><rect x="18.5" y="15.5" width="17" height="20" fill="#fff" stroke="#000" stroke-width="1.2"/><path d="M20 34 C21 32 21 26 22.5 25 C24 25 27 29 34 34" fill="none" stroke="#107838" stroke-width="1.6"/><path d="M29 17 V26 M24.5 21.5 H33.5" stroke="#00b020" stroke-width="2.6"/></svg>
<svg class="a" style="left:502px;top:90px" width="39" height="40" viewBox="0 0 39 40"><path d="M9.5 11.5 L13.5 7.5 H30.5 V35.5 H9.5 Z" fill="#fff" stroke="#0000c0" stroke-width="1.1"/><path d="M10 11 L13 8 V11 Z" fill="#b0a890"/><path d="M16 14h12M16 17h9M16 20h11" stroke="#0000c0" stroke-width="1.7"/><path d="M10.5 34 C12 33 12 24 14 23 C16 23 20 32 29 34" fill="none" stroke="#107838" stroke-width="1.8"/></svg>
<svg class="a" style="left:1245px;top:90px" width="41" height="40" viewBox="0 0 41 40"><path d="M4.5 5.5 V29.5 L10 24 L15 34.5 L20 32.5 L15 22.5 L23 22.5 Z" fill="#000"/><path d="M21.5 13.5 C21.5 5.5 37 5.5 37 12.5 C37 17.5 29 17 29 22.5 V23.5" fill="none" stroke="#007030" stroke-width="4.6"/><rect x="25.5" y="26" width="7" height="5" rx="2.2" fill="#007030"/></svg>
<svg class="a" style="left:33px;top:96px" width="21" height="21" viewBox="0 0 21 21"><path d="M6.5 0.7 H14.5 L20.3 6.5 V14.5 L14.5 20.3 H6.5 L0.7 14.5 V6.5 Z" fill="#fff" stroke="#000" stroke-width="1.3" stroke-linejoin="round"/><g fill="#c8c8c8" opacity="0.8"><ellipse cx="4.5" cy="7.5" rx="1.6" ry="3"/><ellipse cx="15" cy="5" rx="2.5" ry="1.5"/><ellipse cx="4.5" cy="12.5" rx="1.8" ry="1.4"/><ellipse cx="12.5" cy="15.5" rx="1.6" ry="2.5"/></g><g fill="#ff2010" stroke="#ff2010" stroke-width="1.2" stroke-linejoin="round"><path d="M6 3 L8.5 3.5 L11.5 7.5 L10 10 L6.5 9.5 L5.5 6 Z"/><path d="M12 8.5 L15 7.5 L18 9 L18.5 11.5 L15 13.5 L12 12.5 Z"/><path d="M3 16 L4 13 L8 11.5 L9.5 14.5 L8 17.5 L5 18.5 Z"/></g><g fill="#ff7050" opacity="0.8"><circle cx="8.5" cy="7" r="1.3"/><circle cx="15" cy="10.5" r="1.3"/><circle cx="6.5" cy="15" r="1.3"/></g></svg>
<svg class="a" style="left:56px;top:118px" width="21" height="21" viewBox="0 0 21 21"><defs><linearGradient id="nv" x1="0" y1="0" x2="1" y2="0"><stop offset="0" stop-color="#000060"/><stop offset="0.5" stop-color="#4040a0"/><stop offset="1" stop-color="#fff" stop-opacity="0.3"/></linearGradient></defs><path d="M1.5 14 C6 16 12 16.5 20 16.5 V18.5 H1.5 Z" fill="url(#nv)"/><path d="M3 15 C4 14 4.2 4 5.5 3.5 C7 3 13 14 19.5 15" fill="none" stroke="#107838" stroke-width="1.8"/><path d="M1.5 0 V19 H20" fill="none" stroke="#000" stroke-width="1.5"/></svg>
<!-- /ICONS -->
<!-- MISC -->
<div class="a" style="left:15px;top:102px;width:9px;height:9px;border:1px solid #808080;background:#fff"></div>
<div class="a" style="left:17px;top:106px;width:7px;height:1px;background:#000"></div>
<div class="a" style="left:26px;top:107px;width:7px;height:1px;background:repeating-linear-gradient(to right,#808080 0 1px,transparent 1px 2px)"></div>
<div class="a" style="left:43px;top:117px;width:1px;height:7px;background:repeating-linear-gradient(to bottom,#808080 0 1px,transparent 1px 2px)"></div>
<div class="a" style="left:38px;top:124px;width:9px;height:9px;border:1px solid #808080;background:#fff"></div>
<div class="a" style="left:40px;top:129px;width:7px;height:1px;background:#000"></div>
<div class="a" style="left:43px;top:126px;width:1px;height:7px;background:#000"></div>
<div class="a" style="left:49px;top:129px;width:6px;height:1px;background:repeating-linear-gradient(to right,#808080 0 1px,transparent 1px 2px)"></div>
<div class="t" style="left:58px;top:100px">Decay_Coumarin_6.phu | - unknown -</div>
<div class="a" style="left:79px;top:117px;width:137px;height:22px;background:#d4d0c8"></div>
<div class="t" style="left:81px;top:122px">Decay_Coumarin_6.phu.etc</div>
<div class="a" style="left:307px;top:133px;width:114px;height:20px;background:#d4d0c8"></div>
<div class="t" style="left:357px;top:136px">Curves  IRF</div>
<div class="a" style="left:307px;top:153px;width:114px;height:19px;background:#0a246a"></div>
<div class="a" style="left:307px;top:153px;width:112px;height:17px;border:1px dotted #e0d8a0"></div>
<div class="a" style="left:396px;top:154px;width:1px;height:17px;background:#c0c0c0"></div>
<svg class="a" style="left:310px;top:159px" width="9" height="8"><path d="M1 4 L3.5 6.5 L8 1" fill="none" stroke="#000" stroke-width="2"/></svg>
<div class="t" style="left:321px;top:156px;color:#fff">1.</div>
<div class="a" style="left:331px;top:154px;width:20px;height:16px;background:#fff"></div>
<svg class="a" style="left:331px;top:154px" width="20" height="17"><path d="M1 15 V4 H1.8 C3 9 3 13 4.5 14.5 L6 15.3 H20" fill="none" stroke="#0000ff" stroke-width="2"/></svg>
<div class="t" style="left:357px;top:156px;color:#fff">crv[0]</div>
<svg class="a" style="left:310px;top:179px" width="9" height="8"><path d="M1 4 L3.5 6.5 L8 1" fill="none" stroke="#000" stroke-width="2"/></svg>
<div class="t" style="left:321px;top:176px">2.</div>
<svg class="a" style="left:331px;top:176px" width="20" height="17"><path d="M1 11 V3 H2.2 L10.5 11.5 L12 12.3 H20" fill="none" stroke="#0000ff" stroke-width="2"/></svg>
<div class="t" style="left:357px;top:176px">crv</div>
<div class="a" style="left:370px;top:162px;width:153px;height:65px;background:#d4d0c8;box-shadow:inset -1px -1px #404040,inset 1px 1px #d4d0c8,inset -2px -2px #808080,inset 2px 2px #fff"></div>
<div class="t" style="left:390px;top:167px;letter-spacing:0.1px">Decay: [0] Dataset: 1.</div>
<svg class="a" style="left:510px;top:169px" width="4" height="8"><path d="M0 0 L4 4 L0 8Z" fill="#000"/></svg>
<div class="a" style="left:374px;top:185px;width:145px;height:1px;background:#808080"></div>
<div class="a" style="left:374px;top:186px;width:145px;height:1px;background:#fff"></div>
<div class="a" style="left:373px;top:191px;width:144px;height:17px;background:#0a246a"></div>
<div class="t" style="left:390px;top:193px;color:#fff">Curve type</div>
<svg class="a" style="left:510px;top:195px" width="4" height="8"><path d="M0 0 L4 4 L0 8Z" fill="#fff"/></svg>
<div class="t" style="left:390px;top:210px">Clear Curvelist</div>
<div class="a" style="left:517px;top:189px;width:74px;height:38px;background:#d4d0c8;box-shadow:inset -1px -1px #404040,inset 1px 1px #d4d0c8,inset -2px -2px #808080,inset 2px 2px #fff"></div>
<div class="a" style="left:525px;top:196px;width:6px;height:6px;border-radius:50%;background:#000"></div>
<div class="t" style="left:536px;top:193px">Decay</div>
<div class="a" style="left:520px;top:208px;width:68px;height:17px;background:#0a246a"></div>
<div class="t" style="left:536px;top:210px;color:#fff">IRF</div>
<div class="t" style="left:286px;top:155px;color:#e81010;font-weight:bold;font-size:16px;line-height:16px">1</div>
<div class="t" style="left:360px;top:192px;color:#e81010;font-weight:bold;font-size:16px;line-height:16px">2</div>
<div class="t" style="left:573px;top:206px;color:#e81010;font-weight:bold;font-size:16px;line-height:16px">3</div>
<!-- /MISC -->
</body></html>
